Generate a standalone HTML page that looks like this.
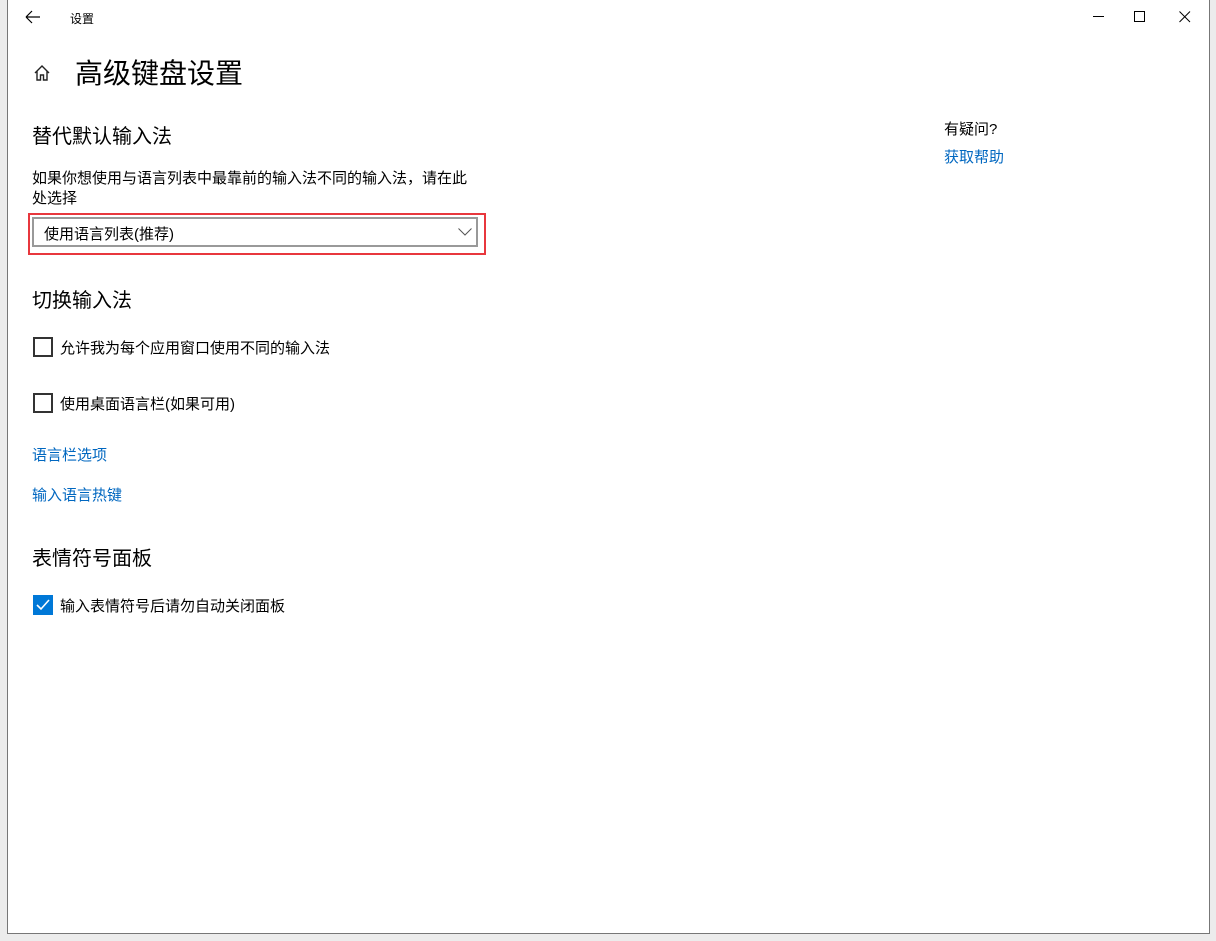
<!DOCTYPE html>
<html><head><meta charset="utf-8"><style>
body{margin:0;width:1216px;height:941px;background:#ececec;position:relative;overflow:hidden;font-family:"Liberation Sans","Noto Sans CJK SC",sans-serif;color:#000}
.win{position:absolute;left:7px;top:-1px;width:1201px;height:933px;background:#fff;border:1px solid #777}
.a{position:absolute;white-space:nowrap}
.h2{font-size:20px}
.t{font-size:15px}
.link{font-size:15px;color:#0067c0}
.cb{position:absolute;width:16px;height:16px;border:2px solid #333}
</style></head><body>
<div class="win">
<svg class="a" style="left:17px;top:10px" width="16" height="14" viewBox="0 0 16 14"><path d="M1 7H15M1 7L7 1M1 7L7 13" stroke="#000" stroke-width="1.2" fill="none"/></svg>
<div class="a" style="left:62px;top:10px;font-size:12px">设置</div>
<svg class="a" style="left:1085px;top:16px" width="12" height="2"><rect width="11" height="1" fill="#000"/></svg>
<svg class="a" style="left:1126px;top:11px" width="12" height="12"><rect x=".5" y=".5" width="10" height="10" stroke="#000" fill="none"/></svg>
<svg class="a" style="left:1171px;top:11px" width="12" height="12"><path d="M.5 .5L11 11M11 .5L.5 11" stroke="#000"/></svg>
<svg class="a" style="left:25px;top:64px" width="18" height="18" viewBox="0 0 18 18"><path d="M2 9L9 2L16 9M4 7V16H7.5V11H10.5V16H14V7" stroke="#222" stroke-width="1.4" fill="none"/></svg>
<div class="a" style="left:67px;top:52px;font-size:28px">高级键盘设置</div>
<div class="a h2" style="left:24px;top:120px">替代默认输入法</div>
<div class="a t" style="left:24px;top:169px;line-height:20px">如果你想使用与语言列表中最靠前的输入法不同的输入法，请在此<br>处选择</div>
<div class="a" style="left:20px;top:213px;width:454px;height:38px;border:2px solid #e8373d"></div>
<div class="a" style="left:24px;top:217px;width:446px;height:30px;border:2px solid #999;box-sizing:border-box"></div>
<div class="a t" style="left:36px;top:223px">使用语言列表(推荐)</div>
<svg class="a" style="left:450px;top:228px" width="14" height="8"><path d="M.5 .5L7 7L13.5 .5" stroke="#555" fill="none"/></svg>
<div class="a h2" style="left:24px;top:284px">切换输入法</div>
<div class="cb" style="left:25px;top:337px"></div>
<div class="a t" style="left:52px;top:337px">允许我为每个应用窗口使用不同的输入法</div>
<div class="cb" style="left:25px;top:393px"></div>
<div class="a t" style="left:52px;top:393px">使用桌面语言栏(如果可用)</div>
<div class="a link" style="left:24px;top:444px">语言栏选项</div>
<div class="a link" style="left:24px;top:484px">输入语言热键</div>
<div class="a h2" style="left:24px;top:542px">表情符号面板</div>
<svg class="a" style="left:25px;top:595px" width="20" height="20"><rect width="20" height="20" fill="#0078d7"/><path d="M4 10L8 14L16 5" stroke="#fff" stroke-width="1.6" fill="none"/></svg>
<div class="a t" style="left:52px;top:595px">输入表情符号后请勿自动关闭面板</div>
<div class="a t" style="left:936px;top:118px">有疑问?</div>
<div class="a link" style="left:936px;top:146px">获取帮助</div>
</div>
</body></html>
